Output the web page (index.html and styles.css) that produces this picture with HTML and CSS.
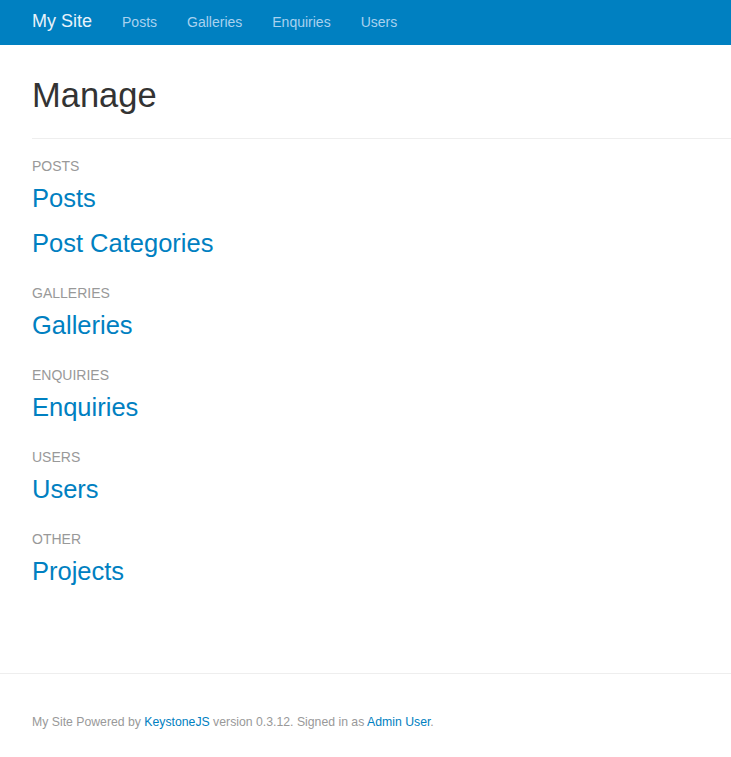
FILE: index.html
```html
<!DOCTYPE html>
<html lang="en">
<head>
    <meta charset="UTF-8">
    <meta name="viewport" content="width=device-width, initial-scale=1.0">
    <title>Manage</title>
    <link rel="stylesheet" href="styles.css">
</head>
<body>
    <div class="navbar">
        <a class="brand" href="#">My Site</a>
        <a class="nav-link" href="#">Posts</a>
        <a class="nav-link" href="#">Galleries</a>
        <a class="nav-link" href="#">Enquiries</a>
        <a class="nav-link" href="#">Users</a>
    </div>

    <div class="content">
        <h1>Manage</h1>
        <hr>
        <div class="section">
            <div class="section-title">Posts</div>
            <a class="list-link" href="#">Posts</a>
            <a class="list-link" href="#">Post Categories</a>
        </div>
        <div class="section">
            <div class="section-title">Galleries</div>
            <a class="list-link" href="#">Galleries</a>
        </div>
        <div class="section">
            <div class="section-title">Enquiries</div>
            <a class="list-link" href="#">Enquiries</a>
        </div>
        <div class="section">
            <div class="section-title">Users</div>
            <a class="list-link" href="#">Users</a>
        </div>
        <div class="section">
            <div class="section-title">Other</div>
            <a class="list-link" href="#">Projects</a>
        </div>
    </div>

    <div class="footer">
        My Site Powered by <a href="#">KeystoneJS</a> version 0.3.12. Signed in as <a href="#">Admin User</a>.
    </div>
</body>
</html>
```

FILE: styles.css
```css
body {
    font-family: "Liberation Sans", Arial, sans-serif;
    background-color: #fff;
    margin: 0;
    padding: 0;
    color: #333;
}
a {
    text-decoration: none;
}
.navbar {
    display: flex;
    align-items: center;
    height: 43px;
    padding: 0 0 2px 32px;
    background-color: #0080c1;
}
.brand {
    font-size: 18px;
    color: #e8f2fa;
    margin-right: 15px;
}
.nav-link {
    font-size: 14px;
    color: #a9d2ef;
    padding: 0 15px;
}
.nav-link:hover {
    color: #fff;
}
.content {
    padding-left: 32px;
    padding-bottom: 80px;
}
h1 {
    font-size: 34.5px;
    font-weight: 400;
    line-height: 1.1;
    color: #333;
    margin: 32px 0 23px;
}
hr {
    border: 0;
    border-top: 1px solid #eee;
    margin: 0 0 17px;
}
.section {
    margin-bottom: 17px;
}
.section-title {
    font-size: 14px;
    line-height: 20px;
    text-transform: uppercase;
    color: #999;
}
.list-link {
    display: block;
    font-size: 25.5px;
    line-height: 45px;
    color: #0080c1;
}
.list-link:hover {
    text-decoration: underline;
}
.footer {
    border-top: 1px solid #eee;
    margin-top: -18px;
    padding: 39px 32px 30px;
    font-size: 12.25px;
    line-height: 18px;
    color: #999;
}
.footer a {
    color: #0080c1;
}
```
